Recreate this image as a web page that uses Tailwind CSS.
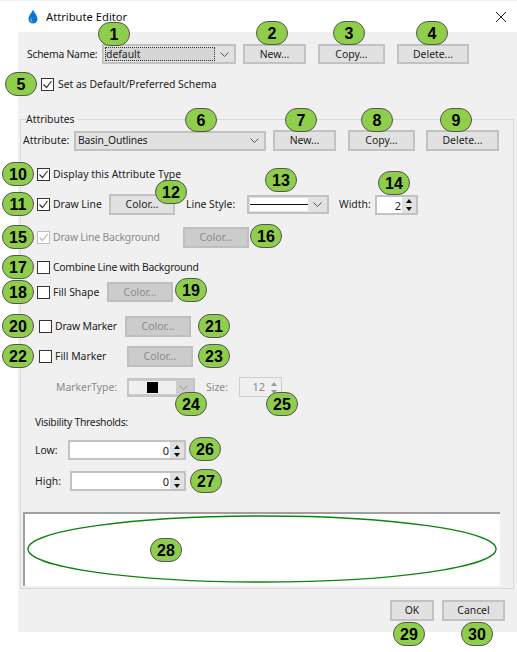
<!DOCTYPE html>
<html lang="en">
<head>
<meta charset="UTF-8" />
<title>Attribute Editor</title>
<script src="https://cdn.jsdelivr.net/npm/@tailwindcss/browser@4"></script>
</head>
<body class="bg-white">
<div class="relative w-[517px] h-[652px] overflow-hidden font-['Noto_Sans',sans-serif] text-[10.4px] leading-[17px] text-[#222] whitespace-nowrap">

  <!-- Title bar -->
  <div class="flex items-center h-[32px] pl-[28px] pr-[11px] border-t border-[#f2f2f2]">
    <svg class="w-[10px] h-[15px]" viewBox="0 0 10 15">
      <path d="M5 0.5C6 3.5 9.5 6.5 9.5 10A4.5 4.5 0 0 1 0.5 10C0.5 6.5 4 3.5 5 0.5Z" fill="#0d74c9" />
      <path d="M3 8C2 10 2.5 13 5 13.5C3.5 12 3.5 10 3 8Z" fill="#5fd3f5" />
    </svg>
    <span class="ml-[8px] text-[11.2px] text-[#111]">Attribute Editor</span>
    <svg class="ml-auto w-[10px] h-[10px]" viewBox="0 0 10 10">
      <path d="M0 0L10 10M10 0L0 10" stroke="#222" stroke-width="1" fill="none" />
    </svg>
  </div>

  <!-- Dialog panel -->
  <div class="ml-[18px] h-[600px] pt-[12px] bg-[#f0f0f0]">

    <!-- Schema row -->
    <div class="flex items-center h-[20px] ml-[9px]">
      <span class="w-[75px] tracking-[-0.25px]">Schema Name:</span>
      <div class="flex items-center w-[134px] h-[20px] bg-[#e1e1e1] border-2 border-[#c2c2c2] pl-[1px]">
        <span class="flex-1 h-[14px] leading-[12px] bg-[#d6d6d6] border border-dotted border-[#333]">default</span>
        <svg class="mx-[5px] w-[9px] h-[5px]" viewBox="0 0 9 5"><path d="M0.5 0.5L4.5 4.5L8.5 0.5" stroke="#555" fill="none" /></svg>
      </div>
      <button class="ml-[7px] w-[63px] h-[20px] bg-[#e1e1e1] border-2 border-[#c2c2c2]">New...</button>
      <button class="ml-[12px] w-[67px] h-[20px] bg-[#e1e1e1] border-2 border-[#c2c2c2]">Copy...</button>
      <button class="ml-[12px] w-[72px] h-[20px] bg-[#e1e1e1] border-2 border-[#c2c2c2]">Delete...</button>
    </div>

    <!-- Default schema -->
    <div class="flex items-center h-[20px] mt-[10px] ml-[23px]">
      <span class="flex items-center justify-center w-[13px] h-[13px] bg-white border border-[#333]">
        <svg class="w-[11px] h-[11px]" viewBox="0 0 11 11"><path d="M1.5 5.5L4.5 8.5L9.5 2" stroke="#333" stroke-width="1.2" fill="none" /></svg>
      </span>
      <span class="ml-[4px]">Set as Default/Preferred Schema</span>
    </div>

    <!-- Attributes group -->
    <div class="relative ml-[2px] mt-[25px] w-[494px] h-[470px] border border-[#d9d9d9]">
      <span class="absolute left-[5px] top-[-7px] bg-[#f0f0f0] pr-[2px] leading-[13px]">Attributes</span>

      <div class="flex items-center h-[21px] mt-[10px] ml-[2px]">
        <span class="w-[51px]">Attribute:</span>
        <div class="flex items-center w-[192px] h-[20px] bg-[#e1e1e1] border-2 border-[#c2c2c2] pl-[2px]">
          <span class="flex-1 tracking-[-0.2px]">Basin_Outlines</span>
          <svg class="mx-[5px] w-[9px] h-[5px]" viewBox="0 0 9 5"><path d="M0.5 0.5L4.5 4.5L8.5 0.5" stroke="#555" fill="none" /></svg>
        </div>
        <button class="ml-[7px] w-[63px] h-[21px] bg-[#e1e1e1] border-2 border-[#c2c2c2]">New...</button>
        <button class="ml-[12px] w-[67px] h-[21px] bg-[#e1e1e1] border-2 border-[#c2c2c2]">Copy...</button>
        <button class="ml-[11px] w-[73px] h-[21px] bg-[#e1e1e1] border-2 border-[#c2c2c2]">Delete...</button>
      </div>

      <div class="flex items-center h-[20px] mt-[13px] ml-[16px]">
        <span class="flex items-center justify-center w-[13px] h-[13px] bg-white border border-[#333]">
          <svg class="w-[11px] h-[11px]" viewBox="0 0 11 11"><path d="M1.5 5.5L4.5 8.5L9.5 2" stroke="#333" stroke-width="1.2" fill="none" /></svg>
        </span>
        <span class="ml-[3px]">Display this Attribute Type</span>
      </div>

      <div class="flex items-center h-[21px] mt-[10px] ml-[16px]">
        <span class="flex items-center justify-center w-[13px] h-[13px] bg-white border border-[#333]">
          <svg class="w-[11px] h-[11px]" viewBox="0 0 11 11"><path d="M1.5 5.5L4.5 8.5L9.5 2" stroke="#333" stroke-width="1.2" fill="none" /></svg>
        </span>
        <span class="ml-[3px] w-[56px]">Draw Line</span>
        <button class="w-[66px] h-[21px] bg-[#e1e1e1] border-2 border-[#c2c2c2]">Color...</button>
        <span class="ml-[11px] w-[61px]">Line Style:</span>
        <div class="flex items-center w-[82px] h-[19px] bg-[#e1e1e1] border-2 border-[#c2c2c2] pl-[1px]">
          <div class="flex items-center flex-1 h-[13px] bg-white"><div class="w-full h-[1px] bg-[#111]"></div></div>
          <svg class="mx-[5px] w-[9px] h-[5px]" viewBox="0 0 9 5"><path d="M0.5 0.5L4.5 4.5L8.5 0.5" stroke="#555" fill="none" /></svg>
        </div>
        <span class="ml-[10px] w-[36px]">Width:</span>
        <div class="flex w-[43px] h-[20px] bg-white border-2 border-[#c2c2c2]">
          <span class="flex-1 text-right pr-[1px] text-[11px]">2</span>
          <div class="flex flex-col justify-center gap-[1px] w-[14px] bg-[#e1e1e1]">
            <svg class="w-full h-[7px]" viewBox="0 0 14 7"><path d="M7 2L10 6H4Z" fill="#111" /></svg>
            <svg class="w-full h-[7px]" viewBox="0 0 14 7"><path d="M7 6L10 2H4Z" fill="#111" /></svg>
          </div>
        </div>
      </div>

      <div class="flex items-center h-[21px] mt-[12px] ml-[16px]">
        <span class="flex items-center justify-center w-[13px] h-[13px] bg-white border border-[#bfbfbf]">
          <svg class="w-[11px] h-[11px]" viewBox="0 0 11 11"><path d="M1.5 5.5L4.5 8.5L9.5 2" stroke="#b5b5b5" stroke-width="1.2" fill="none" /></svg>
        </span>
        <span class="ml-[3px] w-[130px] text-[#8a8a8a] tracking-[-0.2px]">Draw Line Background</span>
        <button class="w-[66px] h-[21px] bg-[#cccccc] border-2 border-[#bfbfbf] text-[#8a8a8a]">Color...</button>
      </div>

      <div class="flex items-center h-[20px] mt-[9px] ml-[16px]">
        <span class="w-[13px] h-[13px] bg-white border border-[#333]"></span>
        <span class="ml-[3px] tracking-[-0.25px]">Combine Line with Background</span>
      </div>

      <div class="flex items-center h-[20px] mt-[5px] ml-[16px]">
        <span class="w-[13px] h-[13px] bg-white border border-[#333]"></span>
        <span class="ml-[3px] w-[54px]">Fill Shape</span>
        <button class="w-[66px] h-[20px] bg-[#cccccc] border-2 border-[#bfbfbf] text-[#8a8a8a]">Color...</button>
      </div>

      <div class="flex items-center h-[21px] mt-[14px] ml-[18px]">
        <span class="w-[13px] h-[13px] bg-white border border-[#333]"></span>
        <span class="ml-[3px] w-[70px] tracking-[-0.15px]">Draw Marker</span>
        <button class="w-[66px] h-[21px] bg-[#cccccc] border-2 border-[#bfbfbf] text-[#8a8a8a]">Color...</button>
      </div>

      <div class="flex items-center h-[21px] mt-[9px] ml-[18px]">
        <span class="w-[13px] h-[13px] bg-white border border-[#333]"></span>
        <span class="ml-[3px] w-[72px]">Fill Marker</span>
        <button class="w-[66px] h-[21px] bg-[#cccccc] border-2 border-[#bfbfbf] text-[#8a8a8a]">Color...</button>
      </div>

      <div class="flex items-center h-[20px] mt-[10px] ml-[35px] text-[#8a8a8a]">
        <span class="w-[71px]">MarkerType:</span>
        <div class="flex items-center w-[68px] h-[19px] bg-[#cccccc] border-2 border-[#c6c6c6]">
          <div class="flex items-center justify-center w-[47px] h-[13px] bg-[#f0f0f0]"><div class="w-[11px] h-[11px] bg-black"></div></div>
          <svg class="mx-[3px] w-[9px] h-[5px]" viewBox="0 0 9 5"><path d="M0.5 0.5L4.5 4.5L8.5 0.5" stroke="#999" fill="none" /></svg>
        </div>
        <span class="ml-[11px] w-[33px]">Size:</span>
        <div class="flex w-[43px] h-[20px] bg-[#f0f0f0] border border-[#cfcfcf]">
          <span class="flex-1 text-right pr-[2px] text-[11px]">12</span>
          <div class="flex flex-col justify-center gap-[1px] w-[14px]">
            <svg class="w-full h-[7px]" viewBox="0 0 14 7"><path d="M7 2L10 6H4Z" fill="#999" /></svg>
            <svg class="w-full h-[7px]" viewBox="0 0 14 7"><path d="M7 6L10 2H4Z" fill="#999" /></svg>
          </div>
        </div>
      </div>

      <div class="flex items-center h-[20px] mt-[15px] ml-[14px] tracking-[-0.3px]">Visibility Thresholds:</div>

      <div class="flex items-center h-[20px] mt-[8px] ml-[14px]">
        <span class="w-[33px]">Low:</span>
        <div class="flex w-[118px] h-[20px] bg-white border-2 border-[#c2c2c2]">
          <span class="flex-1 text-right pr-[1px] text-[11px]">0</span>
          <div class="flex flex-col justify-center gap-[1px] w-[14px] bg-[#e1e1e1]">
            <svg class="w-full h-[7px]" viewBox="0 0 14 7"><path d="M7 2L10 6H4Z" fill="#111" /></svg>
            <svg class="w-full h-[7px]" viewBox="0 0 14 7"><path d="M7 6L10 2H4Z" fill="#111" /></svg>
          </div>
        </div>
      </div>

      <div class="flex items-center h-[20px] mt-[11px] ml-[14px]">
        <span class="w-[35px]">High:</span>
        <div class="flex w-[116px] h-[20px] bg-white border-2 border-[#c2c2c2]">
          <span class="flex-1 text-right pr-[1px] text-[11px]">0</span>
          <div class="flex flex-col justify-center gap-[1px] w-[14px] bg-[#e1e1e1]">
            <svg class="w-full h-[7px]" viewBox="0 0 14 7"><path d="M7 2L10 6H4Z" fill="#111" /></svg>
            <svg class="w-full h-[7px]" viewBox="0 0 14 7"><path d="M7 6L10 2H4Z" fill="#111" /></svg>
          </div>
        </div>
      </div>

      <!-- Preview -->
      <div class="mt-[21px] ml-[2px] w-[477px] h-[74px] bg-white border-t-2 border-l-2 border-[#a0a0a0]">
        <svg class="block w-[475px] h-[72px]" viewBox="0 0 475 72">
          <ellipse cx="237" cy="35" rx="234" ry="33" fill="none" stroke="#0b860b" stroke-width="1.4" />
        </svg>
      </div>
    </div>

    <!-- OK / Cancel -->
    <div class="flex justify-end gap-[8px] mt-[11px] pr-[12px]">
      <button class="w-[44px] h-[21px] bg-[#e1e1e1] border-2 border-[#c2c2c2]">OK</button>
      <button class="w-[63px] h-[21px] bg-[#e1e1e1] border-2 border-[#c2c2c2]">Cancel</button>
    </div>
  </div>

  <!-- Numbered callouts -->
  <div class="absolute left-[98px] top-[22px] w-[32px] h-[24px] flex items-center justify-center rounded-full bg-[#8fce4b] border border-[#555] font-['Liberation_Sans'] font-bold text-[16px] text-black">1</div>
  <div class="absolute left-[256px] top-[21px] w-[32px] h-[24px] flex items-center justify-center rounded-full bg-[#8fce4b] border border-[#555] font-['Liberation_Sans'] font-bold text-[16px] text-black">2</div>
  <div class="absolute left-[333px] top-[21px] w-[32px] h-[24px] flex items-center justify-center rounded-full bg-[#8fce4b] border border-[#555] font-['Liberation_Sans'] font-bold text-[16px] text-black">3</div>
  <div class="absolute left-[416px] top-[21px] w-[32px] h-[24px] flex items-center justify-center rounded-full bg-[#8fce4b] border border-[#555] font-['Liberation_Sans'] font-bold text-[16px] text-black">4</div>
  <div class="absolute left-[5px] top-[72px] w-[32px] h-[24px] flex items-center justify-center rounded-full bg-[#8fce4b] border border-[#555] font-['Liberation_Sans'] font-bold text-[16px] text-black">5</div>
  <div class="absolute left-[185px] top-[108px] w-[32px] h-[24px] flex items-center justify-center rounded-full bg-[#8fce4b] border border-[#555] font-['Liberation_Sans'] font-bold text-[16px] text-black">6</div>
  <div class="absolute left-[285px] top-[108px] w-[32px] h-[24px] flex items-center justify-center rounded-full bg-[#8fce4b] border border-[#555] font-['Liberation_Sans'] font-bold text-[16px] text-black">7</div>
  <div class="absolute left-[361px] top-[108px] w-[32px] h-[24px] flex items-center justify-center rounded-full bg-[#8fce4b] border border-[#555] font-['Liberation_Sans'] font-bold text-[16px] text-black">8</div>
  <div class="absolute left-[440px] top-[108px] w-[32px] h-[24px] flex items-center justify-center rounded-full bg-[#8fce4b] border border-[#555] font-['Liberation_Sans'] font-bold text-[16px] text-black">9</div>
  <div class="absolute left-[2px] top-[162px] w-[32px] h-[24px] flex items-center justify-center rounded-full bg-[#8fce4b] border border-[#555] font-['Liberation_Sans'] font-bold text-[16px] text-black">10</div>
  <div class="absolute left-[2px] top-[192px] w-[32px] h-[24px] flex items-center justify-center rounded-full bg-[#8fce4b] border border-[#555] font-['Liberation_Sans'] font-bold text-[16px] text-black">11</div>
  <div class="absolute left-[155px] top-[180px] w-[32px] h-[24px] flex items-center justify-center rounded-full bg-[#8fce4b] border border-[#555] font-['Liberation_Sans'] font-bold text-[16px] text-black">12</div>
  <div class="absolute left-[265px] top-[168px] w-[32px] h-[24px] flex items-center justify-center rounded-full bg-[#8fce4b] border border-[#555] font-['Liberation_Sans'] font-bold text-[16px] text-black">13</div>
  <div class="absolute left-[378px] top-[171px] w-[32px] h-[24px] flex items-center justify-center rounded-full bg-[#8fce4b] border border-[#555] font-['Liberation_Sans'] font-bold text-[16px] text-black">14</div>
  <div class="absolute left-[2px] top-[225px] w-[32px] h-[24px] flex items-center justify-center rounded-full bg-[#8fce4b] border border-[#555] font-['Liberation_Sans'] font-bold text-[16px] text-black">15</div>
  <div class="absolute left-[250px] top-[224px] w-[32px] h-[24px] flex items-center justify-center rounded-full bg-[#8fce4b] border border-[#555] font-['Liberation_Sans'] font-bold text-[16px] text-black">16</div>
  <div class="absolute left-[2px] top-[255px] w-[32px] h-[24px] flex items-center justify-center rounded-full bg-[#8fce4b] border border-[#555] font-['Liberation_Sans'] font-bold text-[16px] text-black">17</div>
  <div class="absolute left-[2px] top-[280px] w-[32px] h-[24px] flex items-center justify-center rounded-full bg-[#8fce4b] border border-[#555] font-['Liberation_Sans'] font-bold text-[16px] text-black">18</div>
  <div class="absolute left-[175px] top-[278px] w-[32px] h-[24px] flex items-center justify-center rounded-full bg-[#8fce4b] border border-[#555] font-['Liberation_Sans'] font-bold text-[16px] text-black">19</div>
  <div class="absolute left-[2px] top-[314px] w-[32px] h-[24px] flex items-center justify-center rounded-full bg-[#8fce4b] border border-[#555] font-['Liberation_Sans'] font-bold text-[16px] text-black">20</div>
  <div class="absolute left-[198px] top-[314px] w-[32px] h-[24px] flex items-center justify-center rounded-full bg-[#8fce4b] border border-[#555] font-['Liberation_Sans'] font-bold text-[16px] text-black">21</div>
  <div class="absolute left-[2px] top-[344px] w-[32px] h-[24px] flex items-center justify-center rounded-full bg-[#8fce4b] border border-[#555] font-['Liberation_Sans'] font-bold text-[16px] text-black">22</div>
  <div class="absolute left-[198px] top-[344px] w-[32px] h-[24px] flex items-center justify-center rounded-full bg-[#8fce4b] border border-[#555] font-['Liberation_Sans'] font-bold text-[16px] text-black">23</div>
  <div class="absolute left-[175px] top-[392px] w-[32px] h-[24px] flex items-center justify-center rounded-full bg-[#8fce4b] border border-[#555] font-['Liberation_Sans'] font-bold text-[16px] text-black">24</div>
  <div class="absolute left-[266px] top-[392px] w-[32px] h-[24px] flex items-center justify-center rounded-full bg-[#8fce4b] border border-[#555] font-['Liberation_Sans'] font-bold text-[16px] text-black">25</div>
  <div class="absolute left-[189px] top-[437px] w-[32px] h-[24px] flex items-center justify-center rounded-full bg-[#8fce4b] border border-[#555] font-['Liberation_Sans'] font-bold text-[16px] text-black">26</div>
  <div class="absolute left-[190px] top-[469px] w-[32px] h-[24px] flex items-center justify-center rounded-full bg-[#8fce4b] border border-[#555] font-['Liberation_Sans'] font-bold text-[16px] text-black">27</div>
  <div class="absolute left-[150px] top-[538px] w-[32px] h-[24px] flex items-center justify-center rounded-full bg-[#8fce4b] border border-[#555] font-['Liberation_Sans'] font-bold text-[16px] text-black">28</div>
  <div class="absolute left-[393px] top-[622px] w-[32px] h-[24px] flex items-center justify-center rounded-full bg-[#8fce4b] border border-[#555] font-['Liberation_Sans'] font-bold text-[16px] text-black">29</div>
  <div class="absolute left-[461px] top-[622px] w-[32px] h-[24px] flex items-center justify-center rounded-full bg-[#8fce4b] border border-[#555] font-['Liberation_Sans'] font-bold text-[16px] text-black">30</div>
</div>
</body>
</html>
